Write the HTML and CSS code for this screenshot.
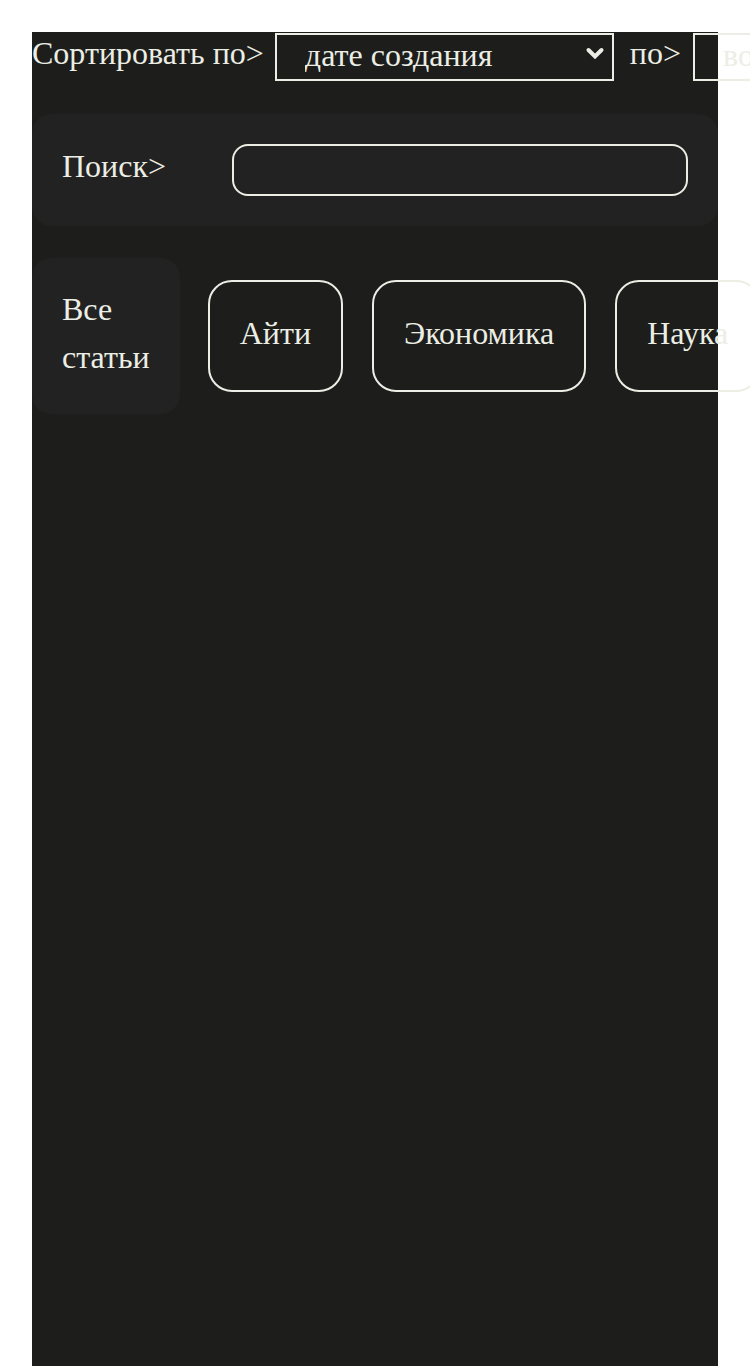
FILE: index.html
```html
<!DOCTYPE html>
<html lang="ru">
<head>
<meta charset="utf-8">
<title>Статьи</title>
<link rel="stylesheet" href="styles.css">
</head>
<body>
<main class="panel">
  <div class="sort-row">
    <span class="sort-label">Сортировать по&gt;</span>
    <span class="select-wrap">
      <select class="sort-select">
        <option>дате создания</option>
        <option>названию</option>
      </select>
      <svg class="chevron" width="20" height="16" viewBox="0 0 20 16" aria-hidden="true"><path d="M3.5 4 L10 10.5 L16.5 4" fill="none" stroke="#eceee5" stroke-width="4" stroke-linecap="round" stroke-linejoin="miter"/></svg>
    </span>
    <span class="sort-label order-label">по&gt;</span>
    <span class="select-wrap order-wrap">
      <select class="sort-select">
        <option>возрастанию</option>
        <option>убыванию</option>
      </select>
      <svg class="chevron" width="20" height="16" viewBox="0 0 20 16" aria-hidden="true"><path d="M3.5 4 L10 10.5 L16.5 4" fill="none" stroke="#eceee5" stroke-width="4" stroke-linecap="round" stroke-linejoin="miter"/></svg>
    </span>
  </div>
  <div class="search-box">
    <label class="search-label" for="q">Поиск&gt;</label>
    <input class="search-input" id="q" type="text">
  </div>
  <div class="categories">
    <div class="cat-all">Все статьи</div>
    <button class="cat-btn">Айти</button>
    <button class="cat-btn">Экономика</button>
    <button class="cat-btn">Наука</button>
    <button class="cat-btn">Культура</button>
  </div>
</main>
</body>
</html>
```

FILE: styles.css
```css
html, body {
  margin: 0;
  background: #ffffff;
}
body {
  padding: 32px 32px 0;
  font-family: "Liberation Serif", "Times New Roman", serif;
  font-size: 32px;
  line-height: 1.5;
  color: #eceee5;
}
.panel {
  background: #1d1e1c;
  min-height: 1400px;
  display: flex;
  flex-direction: column;
  gap: 32px;
}
.sort-row {
  display: flex;
  align-items: flex-start;
  height: 50px;
  white-space: nowrap;
}
.sort-label {
  flex: none;
  line-height: 42px;
}
.select-wrap {
  position: relative;
  flex: none;
  margin-left: 11px;
  margin-top: 1px;
  display: block;
}
.order-wrap {
  margin-left: 12px;
}
.sort-select {
  display: block;
  width: 339px;
  height: 48px;
  font-family: inherit;
  font-size: 32px;
  line-height: 38px;
  color: #eceee5;
  background-color: transparent;
  border: 2px solid #eceee5;
  border-radius: 0;
  padding: 0 36px 4px 28px;
  appearance: none;
  -webkit-appearance: none;
}
.chevron {
  position: absolute;
  right: 9px;
  top: 13px;
}
.order-label {
  margin-left: 16px;
}
.search-box {
  background: #222222;
  border-radius: 20px;
  padding: 30px;
  display: flex;
  align-items: center;
}
.search-label {
  width: 170px;
  flex: none;
  line-height: 40px;
  margin-bottom: 8px;
}
.search-input {
  flex: 1;
  min-width: 0;
  height: 52px;
  box-sizing: border-box;
  border: 2px solid #eceee5;
  border-radius: 16px;
  background: transparent;
  color: #eceee5;
  font: inherit;
  padding: 0 16px;
}
.categories {
  display: flex;
  align-items: center;
  gap: 29px;
}
.cat-all {
  background: #222222;
  border-radius: 20px;
  padding: 27px 30px 33px;
  margin-right: -1px;
}
.cat-btn {
  font: inherit;
  color: #eceee5;
  background: transparent;
  border: 2px solid #eceee5;
  border-radius: 24px;
  padding: 27px 30px 33px;
  white-space: nowrap;
}
```
